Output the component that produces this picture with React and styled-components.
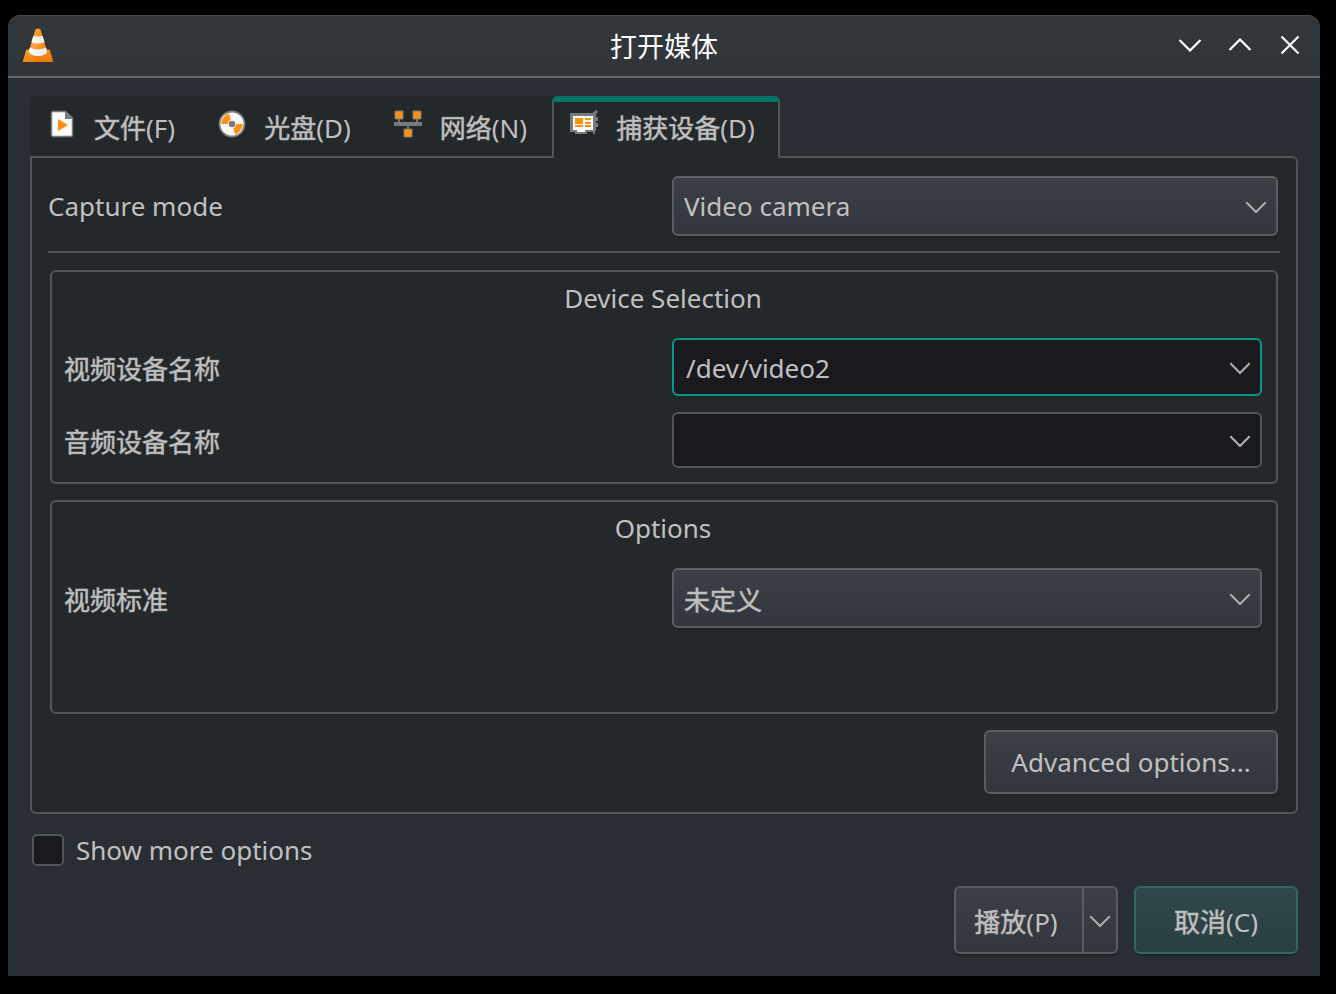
import React from "react";
import styled, { createGlobalStyle, css } from "styled-components";

const line = "#515558";
const panelBg = "#23282b";
const textColor = "#c1c0c0";
const raised = "linear-gradient(#3b3f46, #32363e)";

const GlobalStyle = createGlobalStyle`
  *, *::before, *::after { box-sizing: border-box; }
  body {
    margin: 0;
    background: #000;
    color: ${textColor};
    font: 26px/36px "Noto Sans", "Noto Sans CJK SC", sans-serif;
  }
  button, input, select { font: inherit; color: inherit; margin: 0; }
  svg { display: block; flex: none; }
`;

const heavier = css`
  -webkit-text-stroke: 1px ${textColor}80;
`;

const Window = styled.main`
  margin: 15px 16px 18px 8px;
  border-radius: 12px 12px 0 0;
  overflow: hidden;
  background: #292d34;
`;

const TitleBar = styled.header`
  display: grid;
  grid-template-columns: 1fr auto 1fr;
  align-items: center;
  height: 63px;
  padding: 0 5px 0 14px;
  background: linear-gradient(#32373b, #303539);
  border-top: 1px solid #454852;
  border-bottom: 2px solid #64676b;
`;

const Title = styled.h1`
  margin: 0 9px 0 0;
  padding-top: 2px;
  font-size: 27px;
  font-weight: 400;
  color: #fcfcfc;
`;

const WindowControls = styled.div`
  display: flex;
  justify-content: flex-end;
`;

const WindowButton = styled.button`
  display: grid;
  place-items: center;
  width: 50px;
  height: 50px;
  padding: 0 0 2px;
  border: 0;
  background: none;
  color: #fcfcfc;
`;

const Content = styled.div`
  padding: 18px 22px 22px;
`;

const Tabs = styled.div`
  display: flex;
  height: 60px;
`;

const Tab = styled.button`
  display: flex;
  align-items: center;
  gap: 18px;
  height: 60px;
  padding: 4px 25px 0 18px;
  border: 0;
  border-radius: 6px 0 0 0;
  background: ${panelBg};
  white-space: nowrap;

  & + & {
    padding-left: 17px;
    border-left: 1px solid #1f2427;
    border-radius: 0;
  }

  svg { margin-bottom: 8px; }

  ${(p) =>
    p.$active &&
    css`
      && {
        position: relative;
        height: 62px;
        padding: 4px 23px 2px 16px;
        border: solid ${line};
        border-width: 0 2px;
        border-radius: 6px 6px 0 0;
      }

      &::before {
        content: "";
        position: absolute;
        inset: 0 -2px auto;
        height: 6px;
        border-radius: 6px 6px 0 0;
        background: #027564;
      }
    `}
`;

const Cjk = styled.span`
  ${heavier}
`;

const Panel = styled.section`
  padding: 18px 16px;
  border: 2px solid ${line};
  border-radius: 0 6px 6px 6px;
  background: ${panelBg};
`;

const Row = styled.div`
  display: grid;
  grid-template-columns: 1fr 1fr;
  gap: 18px;
  align-items: center;
  padding-right: ${(p) => (p.$outer ? "2px" : "0")};
`;

const Label = styled.label`
  ${(p) =>
    p.$cjk &&
    css`
      padding-top: 4px;
      ${heavier}
    `}
`;

const Divider = styled.hr`
  height: 2px;
  margin: 15px 0 17px;
  border: 0;
  background: ${line};
`;

const Group = styled.section`
  display: flex;
  flex-direction: column;
  gap: 16px;
  min-height: 214px;
  margin: 0 2px 16px;
  padding: 8px 14px 14px 12px;
  border: 2px solid ${line};
  border-radius: 6px;
`;

const GroupTitle = styled.h2`
  margin: 0 0 6px;
  font-size: 26px;
  font-weight: 400;
  text-align: center;
`;

const Combo = styled.div`
  display: grid;
  grid-template-columns: 1fr 40px;
  align-items: center;
  height: ${(p) => p.$height || 60}px;
  border: 2px solid ${(p) => (p.$focused ? "#049a85" : line)};
  border-radius: 6px;
  background: ${(p) => (p.$editable ? "#191a1e" : raised)};
  ${(p) =>
    !p.$editable &&
    css`
      border-color: #606468 #595d61 #595d61;
      box-shadow: 0 2px 1px #1d2124;
    `}

  > svg {
    grid-area: 1 / 2;
    justify-self: center;
    margin-top: 2px;
    pointer-events: none;
  }
`;

const Select = styled.select`
  grid-area: 1 / 1 / 2 / 3;
  width: 100%;
  height: 100%;
  padding: ${(p) => (p.$cjk ? "4px" : "0")} 40px 0 10px;
  border: 0;
  outline: 0;
  appearance: none;
  background: transparent;
  ${(p) => p.$cjk && heavier}
`;

const TextInput = styled.input`
  min-width: 0;
  width: 100%;
  height: 100%;
  padding: 2px 0 0 12px;
  border: 0;
  outline: 0;
  background: transparent;
`;

const DropButton = styled.button`
  display: grid;
  place-items: center;
  height: 100%;
  padding: 1px 0 0;
  border: 0;
  background: none;
`;

const Actions = styled.div`
  display: flex;
  justify-content: flex-end;
  gap: 16px;
  padding-right: ${(p) => (p.$inset ? "2px" : "0")};
`;

const Button = styled.button`
  min-width: ${(p) => (p.$wide ? 294 : 164)}px;
  height: ${(p) => (p.$wide ? 64 : 68)}px;
  padding: ${(p) => (p.$wide ? "0" : "4px")} 16px 0;
  border: 2px solid ${(p) => (p.$accent ? "#30695f" : "#595d61")};
  border-radius: 6px;
  background: ${(p) => (p.$accent ? "linear-gradient(#30474b, #293f42)" : raised)};
  box-shadow: 0 2px 1px #202428;
`;

const SplitButton = styled.div`
  display: flex;
  width: 164px;
  height: 68px;
  border: 2px solid #595d61;
  border-radius: 6px;
  background: ${raised};
  box-shadow: 0 2px 1px #202428;
`;

const SplitMain = styled.button`
  flex: 1;
  padding: 4px 6px 0 0;
  border: 0;
  background: none;
  white-space: nowrap;
`;

const SplitMenu = styled.button`
  display: grid;
  place-items: center;
  width: 34px;
  padding: 2px 0 0;
  border: 0;
  border-left: 2px solid #595d61;
  background: none;
`;

const CheckRow = styled.label`
  display: flex;
  align-items: center;
  gap: 12px;
  height: 32px;
  margin: 20px 0 20px 2px;
`;

const Checkbox = styled.input`
  width: 32px;
  height: 32px;
  margin: 0;
  appearance: none;
  border: 2px solid ${line};
  border-radius: 5px;
  background: #191a1e;
`;

const Chevron = () => (
  <svg width="22" height="14" viewBox="0 0 22 14" fill="none" stroke="#adaead" strokeWidth="2" aria-hidden="true">
    <path d="M1.300 2.300 11 12l9.700-9.700" />
  </svg>
);

const MinimiseIcon = () => (
  <svg width="24" height="14" viewBox="0 0 24 14" fill="none" stroke="currentColor" strokeWidth="2.2" aria-hidden="true">
    <path d="M1.500 2 12 12.500 22.500 2" />
  </svg>
);

const MaximiseIcon = () => (
  <svg width="24" height="14" viewBox="0 0 24 14" fill="none" stroke="currentColor" strokeWidth="2.2" aria-hidden="true">
    <path d="M1.500 12 12 1.500 22.500 12" />
  </svg>
);

const CloseIcon = () => (
  <svg width="20" height="20" viewBox="0 0 20 20" fill="none" stroke="currentColor" strokeWidth="2.2" aria-hidden="true">
    <path d="M1.500 1.500l17 17M18.500 1.500l-17 17" />
  </svg>
);

const ConeIcon = () => (
  <svg width="32" height="36" viewBox="0 0 32 36" aria-hidden="true">
    <defs>
      <linearGradient id="coneBase" x1="0" y1="0" x2="1" y2="1">
        <stop offset="0" stopColor="#ffa63c" />
        <stop offset="0.45" stopColor="#f88b12" />
        <stop offset="1" stopColor="#ee7600" />
      </linearGradient>
      <linearGradient id="coneBody">
        <stop offset="0" stopColor="#ffac48" />
        <stop offset="1" stopColor="#f58409" />
      </linearGradient>
      <linearGradient id="coneWhite">
        <stop offset="0" stopColor="#fff" />
        <stop offset="1" stopColor="#e6e7e8" />
      </linearGradient>
    </defs>
    <path d="M5.200 21.500h21.600c.7 0 1 .3 1.200 1L31 32.700c.2.800-.1 1.300-.9 1.300H1.900c-.8 0-1.100-.5-.9-1.300L4 22.500c.2-.7.500-1 1.200-1Z" fill="url(#coneBase)" />
    <path d="M7 24.500 14.500 34H27Z" fill="#e97800" opacity="0.5" />
    <path d="M13.300 1.900C13.800-.1 18.200-.1 18.700 1.900L25 23c0 5.500-18 5.500-18 0Z" fill="url(#coneBody)" />
    <path d="M11.300 8q4.700 1.500 9.400 0l2 6.200q-6.700 2.500-13.400 0Z" fill="url(#coneWhite)" />
    <path d="M7.900 19.500q8.100 4 16.200 0l1 3.700c.3 6.300-18.500 6.300-18.200 0Z" fill="url(#coneWhite)" />
  </svg>
);

const FileIcon = () => (
  <svg width="28" height="28" viewBox="0 0 28 28" aria-hidden="true">
    <path d="M5 1.500h12.500L24.500 8v17a1.500 1.500 0 0 1-1.500 1.500H5A1.500 1.500 0 0 1 3.500 25V3A1.500 1.500 0 0 1 5 1.500Z" fill="#fcfcfc" stroke="#77797a" strokeWidth="1.500" />
    <path d="M17 1.500 24.500 9H17Z" fill="#77797a" />
    <path d="M10 9v12l10-6Z" fill="#fd9212" />
  </svg>
);

const DiscIcon = () => (
  <svg width="28" height="28" viewBox="0 0 28 28" aria-hidden="true">
    <circle cx="14" cy="14" r="12.500" fill="#fcfcfc" stroke="#77797a" strokeWidth="1.800" />
    <path d="M14 14H3.200C3.200 9.500 6.500 5.200 11 3.600Z" fill="#fd9212" />
    <path d="M14 14h10.800c0 4.500-3.300 8.800-7.800 10.400Z" fill="#fd9212" />
    <circle cx="14" cy="14" r="4.200" fill="#fcfcfc" />
    <circle cx="14" cy="14" r="3.300" fill="#77797a" />
  </svg>
);

const NetworkIcon = () => (
  <svg width="28" height="28" viewBox="0 0 28 28" aria-hidden="true">
    <path d="M4 9h2v4H4zM22 9h2v4h-2zM13 15h2v4h-2zM0 12h28v4H0z" fill="#77797a" />
    <g fill="#fd9212" stroke="#77797a">
      <path d="M1 1h8v8H1zM19 1h8v8h-8zM10 19h8v8h-8z" />
    </g>
  </svg>
);

const CaptureIcon = () => (
  <svg width="28" height="28" viewBox="0 0 28 28" aria-hidden="true">
    <path d="M0 3h22.500L26 0l2 1-2 4v2h2v4h-2v2h2v4h-2v4h-1v3h-2v-2h-6v2H5v-2H0Z" fill="#77797a" />
    <path d="M3 6h20v14h-8v2H7v-2H3Z" fill="#fcfcfc" />
    <path d="M5 8h8v6H5zM15 8h6v2h-6zM15 12h6v2h-6zM5 15h8v2H5zM15 15h6v2h-6z" fill="#fd9212" />
  </svg>
);

const tabs = [
  { name: "文件", key: "F", Icon: FileIcon },
  { name: "光盘", key: "D", Icon: DiscIcon },
  { name: "网络", key: "N", Icon: NetworkIcon },
  { name: "捕获设备", key: "D", Icon: CaptureIcon, active: true },
];

function EditableCombo({ id, value, height, focused }) {
  return (
    <Combo $editable $focused={focused} $height={height}>
      <TextInput id={id} type="text" defaultValue={value} />
      <DropButton type="button" aria-label="▾">
        <Chevron />
      </DropButton>
    </Combo>
  );
}

function SelectCombo({ id, value, cjk }) {
  return (
    <Combo>
      <Select id={id} defaultValue={value} $cjk={cjk}>
        <option>{value}</option>
      </Select>
      <Chevron />
    </Combo>
  );
}

export default function App() {
  return (
    <>
      <GlobalStyle />
      <Window>
        <TitleBar>
          <ConeIcon />
          <Title>打开媒体</Title>
          <WindowControls>
            <WindowButton type="button" aria-label="最小化"><MinimiseIcon /></WindowButton>
            <WindowButton type="button" aria-label="最大化"><MaximiseIcon /></WindowButton>
            <WindowButton type="button" aria-label="关闭"><CloseIcon /></WindowButton>
          </WindowControls>
        </TitleBar>
        <Content>
          <Tabs role="tablist">
            {tabs.map(({ name, key, Icon, active }) => (
              <Tab key={name} type="button" role="tab" aria-selected={!!active} $active={active}>
                <Icon />
                <span><Cjk>{name}</Cjk>({key})</span>
              </Tab>
            ))}
          </Tabs>
          <Panel role="tabpanel">
            <Row $outer>
              <Label htmlFor="mode">Capture mode</Label>
              <SelectCombo id="mode" value="Video camera" />
            </Row>
            <Divider />
            <Group>
              <GroupTitle>Device Selection</GroupTitle>
              <Row>
                <Label htmlFor="video" $cjk>视频设备名称</Label>
                <EditableCombo id="video" value="/dev/video2" height={58} focused />
              </Row>
              <Row>
                <Label htmlFor="audio" $cjk>音频设备名称</Label>
                <EditableCombo id="audio" value="" height={56} />
              </Row>
            </Group>
            <Group>
              <GroupTitle>Options</GroupTitle>
              <Row>
                <Label htmlFor="standard" $cjk>视频标准</Label>
                <SelectCombo id="standard" value="未定义" cjk />
              </Row>
            </Group>
            <Actions $inset>
              <Button type="button" $wide>Advanced options...</Button>
            </Actions>
          </Panel>
          <CheckRow>
            <Checkbox type="checkbox" />
            Show more options
          </CheckRow>
          <Actions>
            <SplitButton>
              <SplitMain type="button"><Cjk>播放</Cjk>(P)</SplitMain>
              <SplitMenu type="button" aria-label="播放选项"><Chevron /></SplitMenu>
            </SplitButton>
            <Button type="button" $accent><Cjk>取消</Cjk>(C)</Button>
          </Actions>
        </Content>
      </Window>
    </>
  );
}
